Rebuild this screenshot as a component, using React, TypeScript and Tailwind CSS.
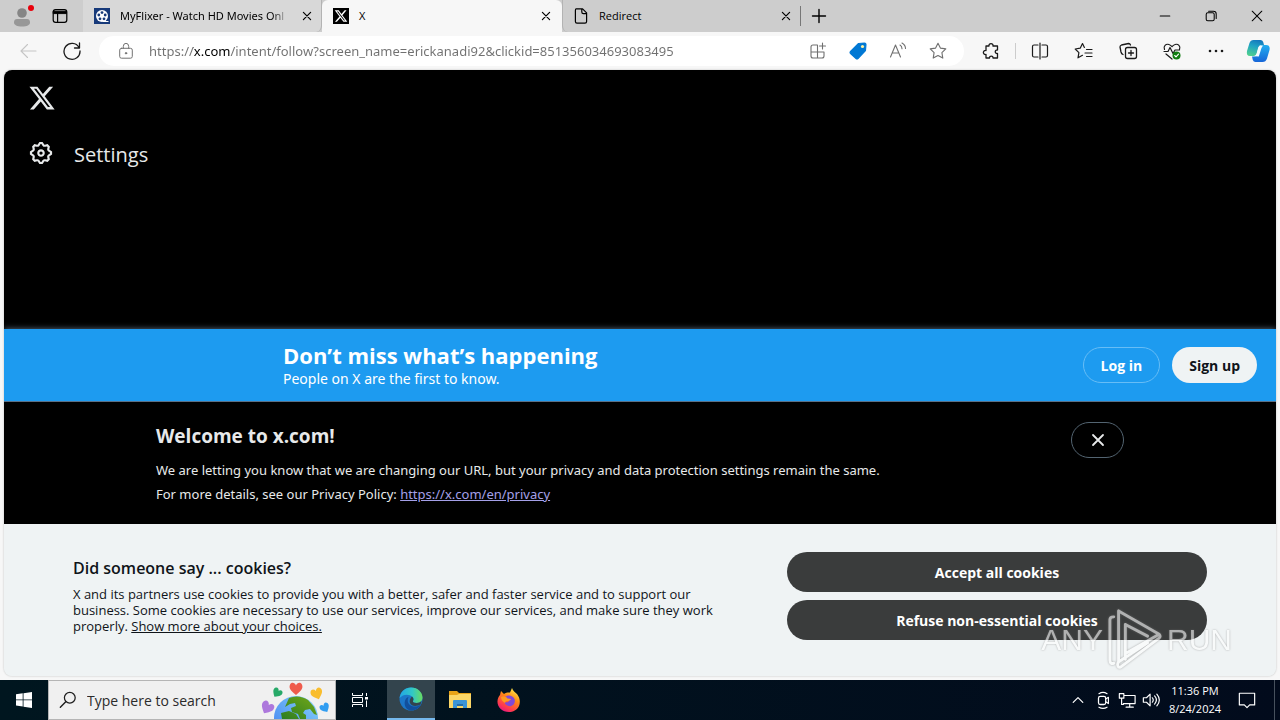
import type { ReactNode } from "react";

function Icon({ size = 20, className = "", children }: { size?: number; className?: string; children: ReactNode }) {
  return (
    <svg
      width={size}
      height={size}
      viewBox="0 0 20 20"
      fill="none"
      stroke="currentColor"
      strokeWidth="1.1"
      strokeLinecap="round"
      strokeLinejoin="round"
      aria-hidden="true"
      className={`shrink-0 ${className}`}
    >
      {children}
    </svg>
  );
}

const X_PATH =
  "M18.244 2.25h3.308l-7.227 8.26 8.502 11.24H16.17l-5.214-6.817L4.99 21.75H1.68l7.73-8.835L1.254 2.25H8.08l4.713 6.231zm-1.161 17.52h1.833L7.084 4.126H5.117z";

const GEAR_PATH =
  "M10.54 1.75h2.92l1.57 2.36c.11.17.32.25.53.21l2.53-.59 2.17 2.17-.58 2.54c-.05.2.04.41.21.53l2.36 1.57v2.92l-2.36 1.57c-.17.12-.26.33-.21.53l.58 2.54-2.17 2.17-2.53-.59c-.21-.04-.42.04-.53.21l-1.57 2.36h-2.92l-1.58-2.36c-.11-.17-.32-.25-.52-.21l-2.54.59-2.17-2.17.58-2.54c.05-.2-.03-.41-.21-.53l-2.35-1.57v-2.92L4.1 8.97c.18-.12.26-.33.21-.53L3.73 5.9 5.9 3.73l2.54.59c.2.04.41-.04.52-.21l1.58-2.36zm1.07 2l-.98 1.47C10.05 6.08 9 6.5 7.99 6.27l-1.46-.34-.6.6.33 1.46c.24 1.01-.18 2.07-1.05 2.64l-1.46.98v.78l1.46.98c.87.57 1.29 1.63 1.05 2.64l-.33 1.46.6.6 1.46-.34c1.01-.23 2.06.19 2.64 1.05l.98 1.47h.78l.97-1.47c.58-.86 1.63-1.28 2.65-1.05l1.45.34.61-.6-.34-1.46c-.23-1.01.18-2.07 1.05-2.64l1.47-.98v-.78l-1.47-.98c-.87-.57-1.28-1.63-1.05-2.64l.34-1.46-.61-.6-1.45.34c-1.02.23-2.07-.19-2.65-1.05l-.97-1.47h-.78zM12 10.5c-.83 0-1.5.67-1.5 1.5s.67 1.5 1.5 1.5 1.5-.67 1.5-1.5-.67-1.5-1.5-1.5zM8.5 12c0-1.93 1.56-3.5 3.5-3.5 1.93 0 3.5 1.57 3.5 3.5s-1.57 3.5-3.5 3.5c-1.94 0-3.5-1.57-3.5-3.5z";

function XLogo({ size }: { size: number }) {
  return (
    <svg width={size} height={size} viewBox="0 0 24 24" fill="currentColor" aria-hidden="true" className="shrink-0">
      <path d={X_PATH} />
    </svg>
  );
}

function Cross() {
  return (
    <Icon size={16}>
      <path d="M5.500 5.500l9 9M14.500 5.500l-9 9" strokeWidth="1.5" />
    </Icon>
  );
}

function MovieIcon() {
  return (
    <svg width="16" height="16" viewBox="0 0 16 16" aria-hidden="true" className="shrink-0">
      <rect width="16" height="16" fill="#173a7a" />
      <circle cx="8" cy="8" r="6" fill="#fff" />
      <path d="M9 13.500h5.500" stroke="#fff" strokeWidth="1" />
      <g fill="#173a7a">
        <circle cx="8" cy="4.600" r="1.400" />
        <circle cx="4.800" cy="7" r="1.400" />
        <circle cx="11.200" cy="7" r="1.400" />
        <circle cx="6" cy="10.800" r="1.400" />
        <circle cx="10" cy="10.800" r="1.400" />
      </g>
    </svg>
  );
}

function TabStrip() {
  return (
    <header className="flex h-8 items-stretch bg-[#cdcdcd] text-[11px] text-black">
      <div className="flex w-[83px] shrink-0 items-center">
        <button aria-label="Profile" className="ml-3 flex">
          <svg width="24" height="24" viewBox="0 0 24 24" aria-hidden="true">
            <circle cx="10" cy="9" r="4.8" fill="#858585" />
            <path d="M2 18.5c0-2.400 1.200-3.500 3-3.500h10c1.800 0 3 1.100 3 3.500 0 2.500-3 4-8 4s-8-1.500-8-4z" fill="#979797" />
            <circle cx="19" cy="4" r="3" fill="#e8000b" />
          </svg>
        </button>
        <button aria-label="Tab actions" className="ml-4 flex">
          <Icon size={16}>
            <rect x="1.500" y="2" width="17" height="16" rx="3" strokeWidth="1.500" />
            <path d="M2 4h16v3H2z" fill="currentColor" />
            <path d="M7 7v11" strokeWidth="1.500" />
          </Icon>
        </button>
      </div>
      <div className="flex w-[239px] items-center gap-2.5 rounded-br-md border-r border-[#b3b3b3] bg-[#d8d8d8] pr-1.5 pl-[11px] font-['Noto_Sans',sans-serif]">
        <MovieIcon />
        <span className="min-w-0 flex-1 mask-r-from-90% whitespace-nowrap">MyFlixer - Watch HD Movies Onl</span>
        <button aria-label="Close MyFlixer tab"><Cross /></button>
      </div>
      <div className="flex w-60 items-center gap-2.5 rounded-t-md bg-[#f7f7f7] pr-2 pl-[11px]">
        <span className="flex size-4 items-center justify-center bg-black text-white"><XLogo size={14} /></span>
        <span className="flex-1">X</span>
        <button aria-label="Close X tab"><Cross /></button>
      </div>
      <div className="flex w-[238px] items-center gap-2.5 rounded-bl-md border-l border-[#b3b3b3] pr-1.5 pl-2.5">
        <Icon size={16}>
          <path d="M4 1h8l5 5v11q0 2-2 2H5q-2 0-2-2V3q0-2 1-2zM11 1v4q0 2 2 2h4" strokeWidth="1.500" />
        </Icon>
        <span className="flex-1">Redirect</span>
        <button aria-label="Close Redirect tab"><Cross /></button>
      </div>
      <div className="flex flex-1 items-center">
        <span className="h-5 w-px bg-[#777777]" />
        <button aria-label="New tab" className="ml-2">
          <Icon><path d="M10 3.500v13M3.500 10h13" strokeWidth="1.400" /></Icon>
        </button>
      </div>
      <div className="flex items-center">
        <button aria-label="Minimize" className="flex w-[46px] justify-center">
          <Icon size={16}><path d="M4 10h12" strokeWidth="1.300" /></Icon>
        </button>
        <button aria-label="Restore" className="flex w-[46px] justify-center">
          <Icon size={16}>
            <rect x="4" y="6" width="10" height="10" rx="2" strokeWidth="1.300" />
            <path d="M7 4h6q3.500 0 3.500 3.500V13" strokeWidth="1.300" />
          </Icon>
        </button>
        <button aria-label="Close window" className="flex w-[46px] justify-center">
          <Icon size={16}><path d="M4 4l12 12M16 4L4 16" strokeWidth="1.300" /></Icon>
        </button>
      </div>
    </header>
  );
}

function Toolbar() {
  return (
    <div className="flex h-[38px] items-center bg-[#f7f7f7] text-[#1a1a1a]">
      <button aria-label="Back" className="ml-[18px] text-[#c5c5c5]">
        <Icon><path d="M18 10H3M9.500 3.500L3 10l6.500 6.500" /></Icon>
      </button>
      <button aria-label="Refresh" className="ml-6">
        <Icon><path d="M17 6.500A8 8 0 1 0 18 10M17.500 2v5h-5" strokeWidth="1.300" /></Icon>
      </button>
      <div className="ml-[17px] flex h-[30px] flex-1 items-center rounded-full bg-white pr-4 pl-[18px] text-[#707070]">
        <Icon size={18}>
          <rect x="3" y="7" width="14" height="11" rx="2" />
          <path d="M7 7V5q0-3.500 3-3.500T13 5v2" />
          <circle cx="10" cy="12.500" r=".8" fill="currentColor" />
        </Icon>
        <input
          aria-label="Address"
          className="ml-3.5 h-6 min-w-0 flex-1 bg-[linear-gradient(90deg,#707070_44px,#000000_44px,#000000_81px,#707070_81px)] bg-clip-text font-['Noto_Sans',sans-serif] text-[13px] text-transparent outline-none"
          defaultValue="https://x.com/intent/follow?screen_name=erickanadi92&clickid=851356034693083495"
        />
        <div className="flex items-center gap-5">
          <button aria-label="App available">
            <Icon>
              <path d="M9 4H5q-2 0-2 2v9q0 2 2 2h9q2 0 2-2v-4H3M9.500 4v13M14.500 2v6M11.500 5h6" />
            </Icon>
          </button>
          <button aria-label="Shopping">
            <Icon>
              <path d="M10.500 2.500l6-.500q1.500 0 1.500 1.500l-.5 6-7.500 8q-1 1-2 0l-5.500-5q-1-1 0-2z" fill="#0078d4" stroke="#0078d4" />
              <circle cx="14.500" cy="5.500" r="1.600" fill="#fff3a3" stroke="none" />
            </Icon>
          </button>
          <button aria-label="Read aloud">
            <Icon>
              <path d="M2.500 16L7.500 4l5 12M4.300 12h6.400M12 4q2 1.200 2 3.800M14 2q3.500 2 3.500 5.500" />
            </Icon>
          </button>
          <button aria-label="Favorite">
            <Icon>
              <path d="M10 2.200l2.400 4.900 5.400.8-3.900 3.800.9 5.400-4.800-2.600-4.800 2.600.9-5.400-3.900-3.800 5.400-.8z" />
            </Icon>
          </button>
        </div>
      </div>
      <div className="ml-4 flex items-center">
        <button aria-label="Extensions" className="ml-px">
          <Icon>
            <path d="M5 5h3c-.6-3.200 4.600-3.200 4 0h4.500v4c-3-.5-3 4 0 3.500V17H12c.3-2.600-3.700-2.600-3.500 0H5v-3.500c-3.500.5-3.500-4.500 0-4z" strokeWidth="1.300" />
          </Icon>
        </button>
        <span className="mx-3.5 h-4 w-px bg-[#cccccc]" />
        <div className="flex items-center gap-6">
          <button aria-label="Split screen">
            <Icon>
              <path d="M8 4H4Q2.500 4 2.500 5.500v9Q2.500 16 4 16h4M12 4h4q1.500 0 1.500 1.500v9q0 1.500-1.500 1.500h-4M10 2v16" strokeWidth="1.200" />
            </Icon>
          </button>
          <button aria-label="Favorites list">
            <Icon>
              <path d="M10.500 6.500h-.1L8.500 2.500 6.200 7.200l-5 .8 3.700 3.600-.9 5.200 4.500-2.500M12.500 8.500H18M11 12h7M12.500 15.500H18" strokeWidth="1.200" />
            </Icon>
          </button>
          <button aria-label="Collections">
            <Icon>
              <rect x="7.500" y="6.500" width="11" height="11" rx="2" strokeWidth="1.300" />
              <path d="M13 9.500v5M10.500 12h5M5 13.500q-1.500-.5-2-2.500l-1-5q0-1.500 1.500-2l7-1.500q1.500 0 2 1.500" strokeWidth="1.300" />
            </Icon>
          </button>
          <button aria-label="Browser essentials">
            <Icon>
              <path d="M2.500 8.500C1 5 4 2.500 7 3.500c1.300.4 2.200 1.200 3 2.200.8-1 1.700-1.800 3-2.200 3-1 6 1.500 4.500 5M2 10.500h4l2-4 3 6 2-3.500h4.500M4 13l6 5" strokeWidth="1.200" />
              <circle cx="14.500" cy="14.500" r="4" fill="#107c10" stroke="none" />
              <path d="M12.700 14.500l1.300 1.300 2.500-2.600" stroke="#fff" />
            </Icon>
          </button>
          <button aria-label="More options">
            <Icon>
              <g fill="currentColor" stroke="none">
                <circle cx="4" cy="10" r="1.300" />
                <circle cx="10" cy="10" r="1.300" />
                <circle cx="16" cy="10" r="1.300" />
              </g>
            </Icon>
          </button>
        </div>
        <button aria-label="Copilot" className="mr-2.5 ml-5 flex">
          <svg width="24" height="24" viewBox="0 0 24 24" aria-hidden="true">
            <defs>
              <linearGradient id="copilotLeft" x1="0.600" y1="0" x2="0.300" y2="1">
                <stop offset="0" stopColor="#1478bd" />
                <stop offset="0.400" stopColor="#1fa3c4" />
                <stop offset="1" stopColor="#4fd08f" />
              </linearGradient>
              <linearGradient id="copilotRight" x1="0.500" y1="0" x2="0.500" y2="1">
                <stop offset="0" stopColor="#22aef0" />
                <stop offset="1" stopColor="#1766d8" />
              </linearGradient>
            </defs>
            <path d="M7.500 1H14.500q2 0 2.700 2l.8 3h-3q-2 0-2.800 2.500L10.500 15q-.8 2-3 2H4q-4 0-3-5l2.500-8Q4.500 1 7.500 1z" fill="url(#copilotLeft)" />
            <path d="M16.500 23H9.500q-2 0-2.700-2L6 17.500h2.500q2.200 0 3-2.500l2-6.500Q14.300 6 16.300 6h3.700q4.500 0 3.500 5L21 19.500q-1.200 3.500-4.500 3.500z" fill="url(#copilotRight)" />
            <path d="M12.800 8L10.500 15l-1.500 2.200 3.800.300 2.700-8.500 1.500-2.500-2 .2q-1.500.3-2.200 1.300z" fill="#f4fbff" />
          </svg>
        </button>
      </div>
    </div>
  );
}

function Watermark() {
  return (
    <div
      aria-hidden="true"
      className="pointer-events-none absolute right-11 bottom-1 flex items-center justify-center gap-1 font-['Liberation_Sans',sans-serif] text-[30px] leading-none text-white opacity-60 [text-shadow:0_0_2px_#777777]"
    >
      <span>ANY</span>
      <svg width="56" height="64" viewBox="0 0 58 64" fill="none" stroke="currentColor" strokeWidth="3" strokeLinejoin="round" strokeLinecap="round" className="drop-shadow-[0_0_1px_#777777]">
        <path d="M7 8C4 8 3 9 3 11v42c0 3 2 4 4 3M12 2l42 24-33 19M12 2v53M19 16v36M19 16l23 12M54 26q2 2 0 4L14 60q-3 1-3-3 0-2 2-3l29-19" />
      </svg>
      <span>RUN</span>
    </div>
  );
}

function XPage() {
  return (
    <main className="relative mx-1 mb-1 flex flex-1 flex-col overflow-hidden rounded-lg bg-[#eff3f4] text-[#e7e9ea] shadow-[0_0_2px_#b5b5b5]">
      <nav className="flex-1 bg-black px-6 pt-3">
        <a href="#home" aria-label="X" className="flex size-8 items-center text-[#e7e9ea]"><XLogo size={28} /></a>
        <a href="#settings" className="mt-6 flex items-center gap-5 text-[20px] leading-[34px]">
          <svg width="26" height="26" viewBox="0 0 24 24" fill="currentColor" aria-hidden="true" className="mb-1">
            <path d={GEAR_PATH} />
          </svg>
          Settings
        </a>
      </nav>

      <section className="flex h-[73px] shrink-0 items-center border-b border-[#5b7086] bg-[#1d9bf0] pr-[19px] pl-[279px] text-white shadow-[0_0_6px_#5b7086]">
        <div className="flex-1">
          <h2 className="text-[22px] leading-7 font-bold">Don’t miss what’s happening</h2>
          <p className="font-['Noto_Sans',sans-serif] text-[14px] leading-5">People on X are the first to know.</p>
        </div>
        <div className="flex gap-3 text-[14px] font-bold">
          <button className="h-9 rounded-full border border-[#67bdf6] px-[17px]">Log in</button>
          <button className="h-9 rounded-full bg-[#eff3f4] px-[17px] text-[#0f1419]">Sign up</button>
        </div>
      </section>

      <section className="flex shrink-0 justify-center bg-black pt-5 pb-[18px]">
        <div className="flex w-[968px] max-w-full items-start justify-between">
          <div>
            <h2 className="text-[19px] leading-7 font-bold">Welcome to x.com!</h2>
            <p className="mt-2 font-['Noto_Sans',sans-serif] text-[13px] leading-6">
              We are letting you know that we are changing our URL, but your privacy and data protection settings remain the same.
              <br />
              For more details, see our Privacy Policy: <a href="#privacy" className="text-[#a5a0e8] underline">https://x.com/en/privacy</a>
            </p>
          </div>
          <button aria-label="Dismiss" className="flex h-9 w-[53px] items-center justify-center rounded-full border border-[#536471]">
            <Icon><path d="M5 5l10 10M15 5L5 15" strokeWidth="1.800" /></Icon>
          </button>
        </div>
      </section>

      <section className="flex h-[152px] shrink-0 justify-center bg-[#eff3f4] pt-7 text-[#0f1419]">
        <div className="flex w-[1134px] max-w-full items-start justify-between">
          <div className="w-[642px] pt-1">
            <h2 className="text-[16px] leading-6 font-semibold">Did someone say ... cookies?</h2>
            <p className="mt-1.5 text-[13px] leading-4">
              X and its partners use cookies to provide you with a better, safer and faster service and to support our business. Some cookies are necessary to use our services, improve our services, and make sure they work properly. <a href="#choices" className="underline">Show more about your choices.</a>
            </p>
          </div>
          <div className="flex w-[420px] flex-col gap-2 text-[14px] font-bold text-white">
            <button className="h-10 rounded-full bg-[#3a3c3c]">Accept all cookies</button>
            <button className="h-10 rounded-full bg-[#3a3c3c]">Refuse non-essential cookies</button>
          </div>
        </div>
      </section>
      <Watermark />
    </main>
  );
}

function Globe() {
  const heart = "M0 5C-5 1-6-1-5-3.500S-1-5.500 0-3C1-5.500 4-6 5-3.500S5 1 0 5z";
  return (
    <svg width="72" height="38" viewBox="0 0 72 38" aria-hidden="true" className="shrink-0">
      <defs>
        <linearGradient id="sea" x1="0" y1="1" x2="1" y2="0">
          <stop offset="0" stopColor="#3f7df0" />
          <stop offset="1" stopColor="#86d3fa" />
        </linearGradient>
        <linearGradient id="land" x1="0" y1="1" x2="1" y2="0">
          <stop offset="0" stopColor="#2c7d22" />
          <stop offset="1" stopColor="#73a818" />
        </linearGradient>
      </defs>
      <circle cx="36" cy="37" r="22" fill="url(#sea)" />
      <path d="M29 17q10-4 19 2l6 7 3 8-3-1-4-5-5 1-2 3 3 2v4h-6l-2-5-6-2-1-4 5-2-1-3-5 1-5 3zM21 32l8-2 7 3 3 5H22z" fill="url(#land)" />
      <path d={heart} transform="translate(36 8) scale(1.200)" fill="#ef5b4c" />
      <path d={heart} transform="translate(17 12) rotate(35) scale(.9)" fill="#27a968" />
      <path d={heart} transform="translate(57 13) rotate(-20) scale(1.100)" fill="#f9bd2d" />
      <path d={heart} transform="translate(7 27) rotate(30) scale(1.200)" fill="#ad78dc" />
      <path d={heart} transform="translate(65 27) rotate(-30) scale(.9)" fill="#309df1" />
    </svg>
  );
}

function Taskbar() {
  return (
    <footer className="flex h-10 shrink-0 items-stretch bg-linear-to-r from-[#00161f] to-[#020b1c] text-white">
      <button aria-label="Start" className="flex w-12 items-center justify-center">
        <svg width="16" height="16" viewBox="0 0 16 16" fill="currentColor" aria-hidden="true">
          <path d="M0 2.300L6.700 1.300v6.200H0zM7.500 1.200L16 0v7.500H7.500zM0 8.300h6.700v6.200L0 13.600zM7.500 8.300H16V16l-8.500-1.200z" />
        </svg>
      </button>
      <div className="flex w-72 items-center border border-[#b5b5b5] bg-[#f0f0f0] pr-[3px] pl-2.5 text-[#1f1f1f]">
        <Icon size={18}>
          <circle cx="12" cy="7.500" r="6" strokeWidth="1.400" />
          <path d="M7.500 12L1.500 18" strokeWidth="1.600" />
        </Icon>
        <input aria-label="Search" placeholder="Type here to search" className="ml-2.5 h-6 min-w-0 flex-1 bg-transparent text-[14px] outline-none placeholder:text-[#2b2b2b]" />
        <Globe />
      </div>
      <button aria-label="Task view" className="ml-px flex w-[50px] items-center justify-center pr-1">
        <svg width="16" height="16" viewBox="0 0 16 16" fill="none" stroke="currentColor" aria-hidden="true">
          <path d="M.5 1v2.500h10V1M.5 15v-2.500h10V15M.5 5.500h10v5H.5zM14.500 1v3M14.500 8.500V15" />
          <path d="M13 5h3v2.500h-3z" fill="currentColor" stroke="none" />
        </svg>
      </button>
      <button aria-label="Microsoft Edge" className="flex w-12 items-center justify-center border-b-2 border-[#76b9ed] bg-[#33444d]">
        <svg width="24" height="24" viewBox="0 0 24 24" aria-hidden="true">
          <defs>
            <linearGradient id="edgeWave" x1="0" y1="0.400" x2="1" y2="0.400">
              <stop offset="0" stopColor="#22a6e5" />
              <stop offset="0.550" stopColor="#31c7c7" />
              <stop offset="1" stopColor="#69dc60" />
            </linearGradient>
          </defs>
          <circle cx="12" cy="12" r="11.500" fill="#1c76c8" />
          <path d="M.6 11C1.500 4.500 6.500.5 12 .5c7 0 11.500 5 11.500 10 0 3.500-2.500 5.500-6 5.500-2.500 0-4-1-3.500-2 1-1.500.5-3-.5-4C10 6.500 4 7 .6 11z" fill="url(#edgeWave)" />
          <path d="M9.500 10c-2 4 0 9 5 9.500 3 .3 5.500-.500 7.500-2-2 4-6.500 6.500-11 5.800C6 22.500 4.500 16 6.500 12.500 7.300 11 8.500 10.200 9.500 10z" fill="#124f9c" />
          <path d="M14 14c-.5 1 1 2 3.500 2 2 0 3.900-.6 5-1.900-.1 1.300-.5 2.400-1 3.400-3 1.800-9 2.500-10.500-1.500-.8-2 0-4.500 2-6.500 1.400 1.200 1.900 3 1 4.500z" fill="#33444d" />
        </svg>
      </button>
      <button aria-label="File Explorer" className="flex w-[50px] items-center justify-center">
        <svg width="22" height="20" viewBox="0 0 22 20" aria-hidden="true">
          <path d="M0 1h8l2 2h12v4H0z" fill="#e8a317" />
          <path d="M0 5h8l2-1h12v14H0z" fill="#fbd667" />
          <path d="M4 18v-7q0-1 1-1h12q1 0 1 1v7h-4v-4H8v4z" fill="#3c94d5" />
          <path d="M8 14h6v2H8z" fill="#276ea8" />
        </svg>
      </button>
      <button aria-label="Firefox" className="flex w-12 items-center justify-center">
        <svg width="24" height="24" viewBox="0 0 24 24" aria-hidden="true">
          <defs>
            <linearGradient id="flame" x1="0.800" y1="0" x2="0.250" y2="1">
              <stop offset="0" stopColor="#fff44f" />
              <stop offset="0.400" stopColor="#ff8a16" />
              <stop offset="0.800" stopColor="#ff3750" />
              <stop offset="1" stopColor="#e31587" />
            </linearGradient>
          </defs>
          <path d="M3 7l1-4 3 3c2-1.500 4-1.800 6-1.500L15 0c1 3 3 4 5 6 3 4 3.500 8 2 12-2 4-6 6-10 6C5 24 0 19 .5 13 .7 10.500 1.500 8.500 3 7z" fill="url(#flame)" />
          <path d="M8 9c3-3 8-1.500 9.500 2 1.500 4-2 8-6 7-2.500-.6-4-2.500-4-4.500 1 1 3 1.300 4.500 0-1.500-.5-4-1-4-4.500z" fill="#8149d8" />
          <path d="M4 9c3-1 5-.5 6.500 1.500L14 11c-1 2-3 2-4 2s-1.500.8-2 2C6 14 4 12 4 9z" fill="#ff9a20" />
        </svg>
      </button>
      <div className="flex flex-1 items-center justify-end">
        <button aria-label="Show hidden icons" className="mr-2">
          <Icon size={16}><path d="M4 13l6-6 6 6" strokeWidth="1.500" /></Icon>
        </button>
        <div className="flex items-center gap-1.5">
          <Icon size={18}><rect x="5" y="6" width="8" height="9" rx="2" strokeWidth="1.400" /><path d="M13 9l3-2v7l-3-2M5.500 3q4.500-3 9 0M5.500 18q4.500 2.500 9 0" strokeWidth="1.300" /></Icon>
          <Icon size={18}><path d="M7 5h12v9H6M13 14v4M9 18h8M1.500 3h5v5h-5zM4 8v7h2" strokeWidth="1.300" /></Icon>
          <Icon size={18}><path d="M1.500 7.500H5L9 3.500v13l-4-4H1.500zM11.500 7.500q2 2.500 0 5M14 5.500q4 4.500 0 9M16.500 3.500q5.500 6.500 0 13" strokeWidth="1.300" /></Icon>
        </div>
        <div className="flex w-[70px] flex-col items-center text-[11px] leading-[18px]">
          <span>11:36 PM</span>
          <span>8/24/2024</span>
        </div>
        <button aria-label="Notifications" className="mr-[18px] ml-2">
          <Icon size={18}><path d="M1.500 2.500h17v13H13l-3 3-3-3H1.500z" strokeWidth="1.300" /></Icon>
        </button>
        <span className="h-full w-1.5 border-l border-[#47515d]" />
      </div>
    </footer>
  );
}

export default function App() {
  return (
    <div className="flex min-h-screen flex-col bg-[#f7f7f7] font-['Open_Sans','Noto_Sans',sans-serif]">
      <TabStrip />
      <Toolbar />
      <XPage />
      <Taskbar />
    </div>
  );
}
